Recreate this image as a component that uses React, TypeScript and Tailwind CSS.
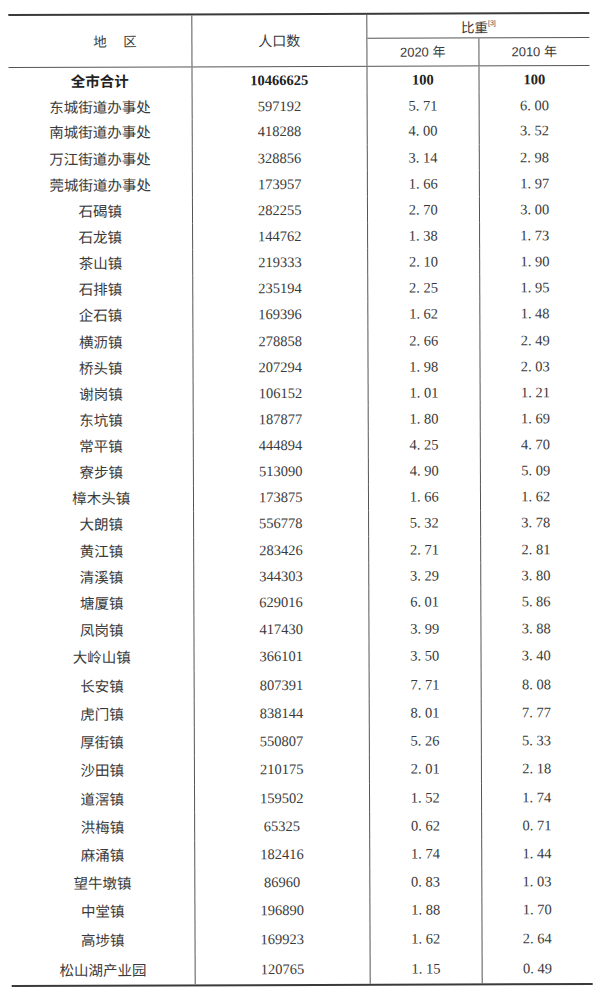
import React from "react";

type Row = { name: string; pop: string; a: string; b: string; bold?: boolean };

const rows: Row[] = [
  { name: "全市合计", pop: "10466625", a: "100", b: "100", bold: true },
  { name: "东城街道办事处", pop: "597192", a: "5.71", b: "6.00" },
  { name: "南城街道办事处", pop: "418288", a: "4.00", b: "3.52" },
  { name: "万江街道办事处", pop: "328856", a: "3.14", b: "2.98" },
  { name: "莞城街道办事处", pop: "173957", a: "1.66", b: "1.97" },
  { name: "石碣镇", pop: "282255", a: "2.70", b: "3.00" },
  { name: "石龙镇", pop: "144762", a: "1.38", b: "1.73" },
  { name: "茶山镇", pop: "219333", a: "2.10", b: "1.90" },
  { name: "石排镇", pop: "235194", a: "2.25", b: "1.95" },
  { name: "企石镇", pop: "169396", a: "1.62", b: "1.48" },
  { name: "横沥镇", pop: "278858", a: "2.66", b: "2.49" },
  { name: "桥头镇", pop: "207294", a: "1.98", b: "2.03" },
  { name: "谢岗镇", pop: "106152", a: "1.01", b: "1.21" },
  { name: "东坑镇", pop: "187877", a: "1.80", b: "1.69" },
  { name: "常平镇", pop: "444894", a: "4.25", b: "4.70" },
  { name: "寮步镇", pop: "513090", a: "4.90", b: "5.09" },
  { name: "樟木头镇", pop: "173875", a: "1.66", b: "1.62" },
  { name: "大朗镇", pop: "556778", a: "5.32", b: "3.78" },
  { name: "黄江镇", pop: "283426", a: "2.71", b: "2.81" },
  { name: "清溪镇", pop: "344303", a: "3.29", b: "3.80" },
  { name: "塘厦镇", pop: "629016", a: "6.01", b: "5.86" },
  { name: "凤岗镇", pop: "417430", a: "3.99", b: "3.88" },
  { name: "大岭山镇", pop: "366101", a: "3.50", b: "3.40" },
  { name: "长安镇", pop: "807391", a: "7.71", b: "8.08" },
  { name: "虎门镇", pop: "838144", a: "8.01", b: "7.77" },
  { name: "厚街镇", pop: "550807", a: "5.26", b: "5.33" },
  { name: "沙田镇", pop: "210175", a: "2.01", b: "2.18" },
  { name: "道滘镇", pop: "159502", a: "1.52", b: "1.74" },
  { name: "洪梅镇", pop: "65325", a: "0.62", b: "0.71" },
  { name: "麻涌镇", pop: "182416", a: "1.74", b: "1.44" },
  { name: "望牛墩镇", pop: "86960", a: "0.83", b: "1.03" },
  { name: "中堂镇", pop: "196890", a: "1.88", b: "1.70" },
  { name: "高埗镇", pop: "169923", a: "1.62", b: "2.64" },
  { name: "松山湖产业园", pop: "120765", a: "1.15", b: "0.49" },
];

// row text centres measured on the scan (page y)
function centres(): number[] {
  const c: number[] = [80.5];
  for (let i = 1; i <= 21; i++) c.push(105 + (i - 1) * 26.15);
  for (let i = 22; i <= 31; i++) c.push(628 + (i - 21) * 28.25);
  c.push(938);
  c.push(968.5);
  return c;
}

function heights(): number[] {
  const c = centres();
  const top = 66.5;
  const bottom = 984;
  const bounds: number[] = [top];
  for (let i = 1; i < c.length; i++) bounds.push((c[i - 1] + c[i]) / 2);
  bounds.push(bottom);
  const h: number[] = [];
  for (let i = 0; i < c.length; i++) h.push(bounds[i + 1] - bounds[i]);
  return h;
}

function Dec({ v }: { v: string }) {
  const i = v.indexOf(".");
  if (i < 0) return <>{v}</>;
  return (
    <>
      {v.slice(0, i)}
      <span className="mr-[3.6px]">.</span>
      {v.slice(i + 1)}
    </>
  );
}

const serif = "font-['Liberation_Serif','Times_New_Roman',serif]";
const cjk = "font-['Noto_Sans_CJK_SC',sans-serif]";

export default function App() {
  const hs = heights();
  return (
    <div className="w-[604px] h-[1000px] bg-white overflow-hidden pt-[12.5px] pl-[10px] text-[#3a3a3a]">
      <div className="w-[581px] rotate-[-0.2deg]">
        <div className="h-[2px] bg-[#3a3a3a]" />
        {/* header */}
        <div className="grid grid-cols-[183.5px_175.5px_222px] h-[52px] border-b border-[#555]">
          <div className={`border-r border-[#555] flex items-center justify-center pl-[30.5px] text-[13.5px] ${cjk}`}>
            <span>地</span>
            <span className="ml-[16.5px]">区</span>
          </div>
          <div className={`border-r border-[#555] flex items-center justify-center text-[14px] ${cjk}`}>
            人口数
          </div>
          <div className="flex flex-col">
            <div className={`h-[24px] border-b border-[#555] flex items-center justify-center text-[13.5px] pt-[1px] ${cjk}`}>
              <span>比重</span>
              <span className="text-[7px] self-start mt-[3px] font-['Liberation_Sans',sans-serif]">[3]</span>
            </div>
            <div className="grid grid-cols-[111.5px_110.5px] flex-1">
              <div className="border-r border-[#555] flex items-center justify-center text-[13px] font-['Liberation_Sans','Noto_Sans_CJK_SC',sans-serif]">
                2020 年
              </div>
              <div className="flex items-center justify-center text-[13px] font-['Liberation_Sans','Noto_Sans_CJK_SC',sans-serif]">
                2010 年
              </div>
            </div>
          </div>
        </div>
        {/* body */}
        {rows.map((r, i) => (
          <div
            key={r.name}
            className="grid grid-cols-[183.5px_175.5px_111.5px_110.5px]"
            style={{ height: `${hs[i]}px` }}
          >
            <div
              className={`border-r border-[#555] flex items-center justify-center text-[14.5px] leading-none ${cjk} ${
                r.bold ? "font-bold text-[#222]" : ""
              }`}
            >
              {r.name}
            </div>
            <div
              className={`border-r border-[#555] flex items-center justify-center text-[14.5px] leading-none ${serif} ${
                r.bold ? "font-bold text-[#222]" : ""
              }`}
            >
              {r.pop}
            </div>
            <div
              className={`border-r border-[#555] flex items-center justify-center text-[14.5px] leading-none ${serif} ${
                r.bold ? "font-bold text-[#222]" : ""
              }`}
            >
              <Dec v={r.a} />
            </div>
            <div
              className={`flex items-center justify-center text-[14.5px] leading-none ${serif} ${
                r.bold ? "font-bold text-[#222]" : ""
              }`}
            >
              <Dec v={r.b} />
            </div>
          </div>
        ))}
        <div className="h-[2px] bg-[#3a3a3a]" />
      </div>
    </div>
  );
}
